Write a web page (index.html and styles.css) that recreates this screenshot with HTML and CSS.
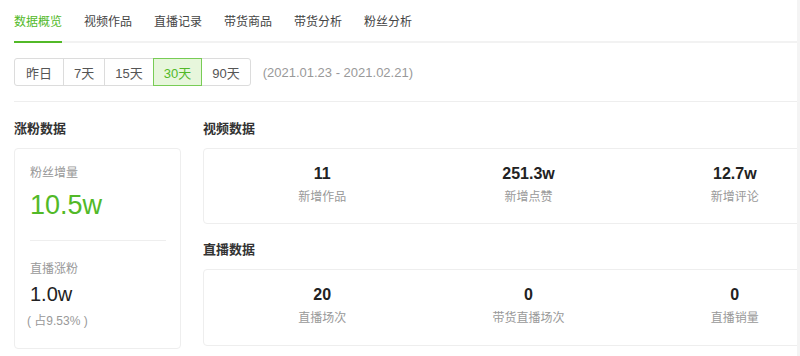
FILE: index.html
```html
<!DOCTYPE html>
<html lang="zh-CN">
  <head>
    <meta charset="UTF-8" />
    <meta name="viewport" content="width=device-width, initial-scale=1.0" />
    <title>数据概览</title>
    <link rel="stylesheet" href="styles.css">
  </head>
  <body>
    <div class="page">
      <div class="tabs">
        <div class="tab active">数据概览</div>
        <div class="tab">视频作品</div>
        <div class="tab">直播记录</div>
        <div class="tab">带货商品</div>
        <div class="tab">带货分析</div>
        <div class="tab">粉丝分析</div>
      </div>

      <div class="range">
        <div class="range-group">
          <button class="range-btn">昨日</button>
          <button class="range-btn">7天</button>
          <button class="range-btn">15天</button>
          <button class="range-btn active">30天</button>
          <button class="range-btn">90天</button>
        </div>
        <span class="range-date">(2021.01.23 - 2021.02.21)</span>
      </div>

      <div class="overview">
        <div class="fans">
          <h4 class="section-title">涨粉数据</h4>
          <div class="card fans-card">
            <div class="fans-label">粉丝增量</div>
            <div class="fans-value green">10.5w</div>
            <div class="fans-split"></div>
            <div class="fans-label">直播涨粉</div>
            <div class="fans-value small">1.0w</div>
            <div class="fans-note">( 占9.53% )</div>
          </div>
        </div>

        <div class="stats">
          <h4 class="section-title">视频数据</h4>
          <div class="card stat-card">
            <div class="stat">
              <div class="stat-num">11</div>
              <div class="stat-label">新增作品</div>
            </div>
            <div class="stat">
              <div class="stat-num">251.3w</div>
              <div class="stat-label">新增点赞</div>
            </div>
            <div class="stat">
              <div class="stat-num">12.7w</div>
              <div class="stat-label">新增评论</div>
            </div>
          </div>

          <h4 class="section-title">直播数据</h4>
          <div class="card stat-card">
            <div class="stat">
              <div class="stat-num">20</div>
              <div class="stat-label">直播场次</div>
            </div>
            <div class="stat">
              <div class="stat-num">0</div>
              <div class="stat-label">带货直播场次</div>
            </div>
            <div class="stat">
              <div class="stat-num">0</div>
              <div class="stat-label">直播销量</div>
            </div>
          </div>
        </div>
      </div>
    </div>
  </body>
</html>
```

FILE: styles.css
```css
body {
  margin: 0;
  padding: 0;
  background: #f4f4f4;
  font-family: "Liberation Sans", "Noto Sans CJK SC", sans-serif;
  color: #333;
}
.page {
  width: 797px;
  height: 356px;
  box-sizing: border-box;
  padding-left: 14px;
  background: #fff;
  overflow: hidden;
}
.tabs {
  display: flex;
  gap: 22px;
  height: 41px;
  border-bottom: 2px solid #f2f2f2;
}
.tab {
  font-size: 12px;
  line-height: 16px;
  padding-top: 14px;
  height: 43px;
  box-sizing: border-box;
  color: #444;
}
.tab.active {
  color: #52b928;
  border-bottom: 2px solid #52b928;
}
.range {
  display: flex;
  align-items: center;
  margin-top: 15px;
  padding-bottom: 15px;
  border-bottom: 1px solid #eee;
}
.range-group {
  display: flex;
}
.range-btn {
  height: 28px;
  padding: 0 10px;
  margin-right: -1px;
  border: 1px solid #dcdcdc;
  background: #fff;
  font-family: inherit;
  font-size: 13px;
  color: #555;
}
.range-btn:first-child {
  padding: 0 11px;
  border-radius: 3px 0 0 3px;
}
.range-btn:last-child {
  border-radius: 0 3px 3px 0;
}
.range-btn.active {
  position: relative;
  background: #e7f6dc;
  border-color: #78cc55;
  color: #52b928;
}
.range-date {
  margin-left: 13px;
  font-size: 13px;
  color: #999;
}
.overview {
  display: flex;
  gap: 22px;
}
.fans {
  width: 167px;
  flex: none;
}
.stats {
  flex: none;
  width: 651px;
}
.section-title {
  margin: 19px 0 11px;
  font-size: 13px;
  line-height: 16px;
  font-weight: bold;
  color: #333;
}
.stats .section-title + .card + .section-title {
  margin-top: 18px;
}
.card {
  border: 1px solid #eee;
  border-radius: 4px;
  box-sizing: border-box;
}
.fans-card {
  height: 201px;
  padding: 16px 14px 0 15px;
}
.fans-label {
  font-size: 12px;
  line-height: 16px;
  color: #999;
}
.fans-value {
  font-size: 27px;
  line-height: 36px;
  margin-top: 6px;
}
.fans-value.green {
  color: #52b928;
}
.fans-value.small {
  font-size: 20px;
  line-height: 28px;
  margin-top: 3px;
  color: #222;
}
.fans-split {
  height: 1px;
  background: #eee;
  margin: 17px 0 20px;
}
.fans-note {
  font-size: 12px;
  line-height: 16px;
  margin: 5px 0 0 -3px;
  color: #999;
}
.stat-card {
  display: grid;
  grid-template-columns: repeat(3, 1fr);
  padding: 14px 15px 0;
}
.stats .stat-card:nth-of-type(1) {
  height: 76px;
}
.stats .stat-card:last-child {
  height: 77px;
}
.stat {
  text-align: center;
}
.stat-num {
  font-size: 16px;
  line-height: 22px;
  font-weight: bold;
  color: #222;
}
.stat-label {
  margin-top: 4px;
  font-size: 12px;
  line-height: 16px;
  color: #999;
}
```
